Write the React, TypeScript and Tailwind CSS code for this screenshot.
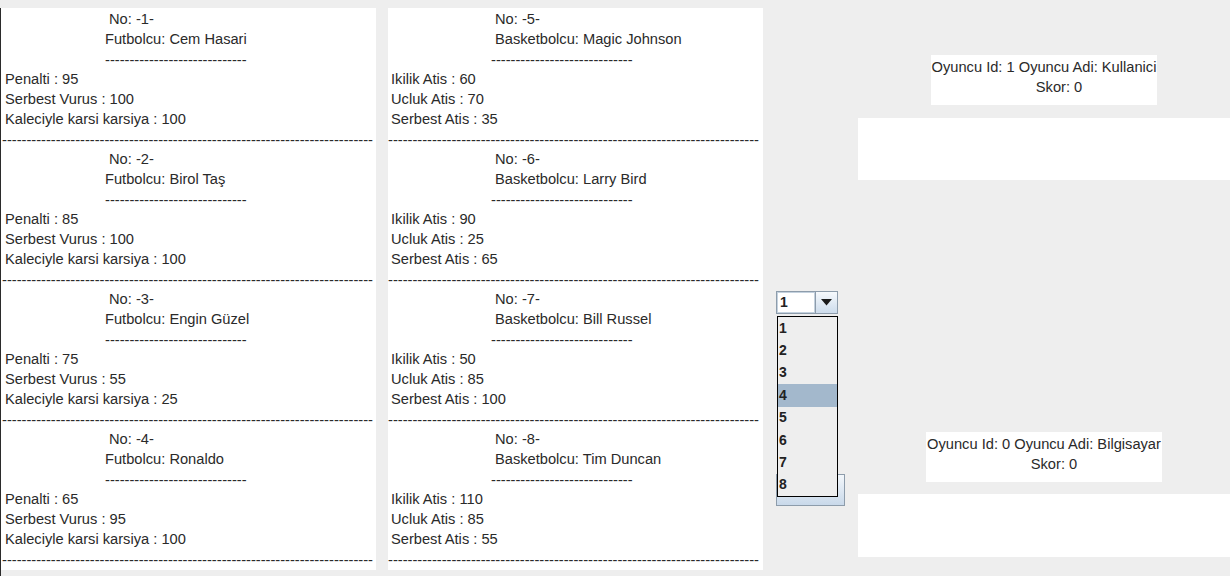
const FONT = { fontFamily: '"Liberation Sans", Arial, sans-serif' };

type Player = { no: number; kind: string; name: string; stats: [string, number][] };

const futbolcular: Player[] = [
  { no: 1, kind: "Futbolcu", name: "Cem Hasari", stats: [["Penalti", 95], ["Serbest Vurus", 100], ["Kaleciyle karsi karsiya", 100]] },
  { no: 2, kind: "Futbolcu", name: "Birol Taş", stats: [["Penalti", 85], ["Serbest Vurus", 100], ["Kaleciyle karsi karsiya", 100]] },
  { no: 3, kind: "Futbolcu", name: "Engin Güzel", stats: [["Penalti", 75], ["Serbest Vurus", 55], ["Kaleciyle karsi karsiya", 25]] },
  { no: 4, kind: "Futbolcu", name: "Ronaldo", stats: [["Penalti", 65], ["Serbest Vurus", 95], ["Kaleciyle karsi karsiya", 100]] },
];

const basketbolcular: Player[] = [
  { no: 5, kind: "Basketbolcu", name: "Magic Johnson", stats: [["Ikilik Atis", 60], ["Ucluk Atis", 70], ["Serbest Atis", 35]] },
  { no: 6, kind: "Basketbolcu", name: "Larry Bird", stats: [["Ikilik Atis", 90], ["Ucluk Atis", 25], ["Serbest Atis", 65]] },
  { no: 7, kind: "Basketbolcu", name: "Bill Russel", stats: [["Ikilik Atis", 50], ["Ucluk Atis", 85], ["Serbest Atis", 100]] },
  { no: 8, kind: "Basketbolcu", name: "Tim Duncan", stats: [["Ikilik Atis", 110], ["Ucluk Atis", 85], ["Serbest Atis", 55]] },
];

const SHORT = "-".repeat(29);
const LONG = "-".repeat(76);

function Kart({ p, basket }: { p: Player; basket?: boolean }) {
  return (
    <div className="h-[140px] overflow-hidden pt-[1px] text-[14.67px] leading-[20px] text-[#2a2a2a] whitespace-pre">
      <div className={basket ? "pl-[107px]" : "pl-[108px]"}>No: -{p.no}-</div>
      <div className={basket ? "pl-[107px]" : "pl-[104px]"}>
        {p.kind}: {p.name}
      </div>
      <div className={`relative top-[1px] ${basket ? "pl-[103px]" : "pl-[104px]"}`}>{SHORT}</div>
      {p.stats.map(([k, v]) => (
        <div key={k} className={basket ? "pl-[3px]" : "pl-[4px]"}>
          {k} : {v}
        </div>
      ))}
      <div className={`relative top-[1px] ${basket ? "pl-0" : "pl-[1px]"}`}>{LONG}</div>
    </div>
  );
}

function OyuncuEtiket({ id, ad, skorPad }: { id: number; ad: string; skorPad: string }) {
  return (
    <div className="mx-auto h-[50px] w-fit bg-white px-[1px] pt-[2px] text-center text-[14.67px] leading-[20px] whitespace-nowrap text-[#2a2a2a]">
      <div>
        Oyuncu Id: {id} Oyuncu Adi: {ad}
      </div>
      <div className={skorPad}>Skor: 0</div>
    </div>
  );
}

function Combo() {
  const items = [1, 2, 3, 4, 5, 6, 7, 8];
  return (
    <div className="relative w-[62px]">
      <div className="flex h-[23px] border border-[#8d9cab] bg-white">
        <div className="flex flex-1 items-center border border-[#c4d1de] pl-[2px] text-[14px] font-bold text-[#222]">1</div>
        <div className="flex w-[22px] items-center justify-center border-l border-[#8d9cab] bg-gradient-to-b from-[#f6f9fc] to-[#cddcec]">
          <svg width="11" height="7" viewBox="0 0 11 7">
            <path d="M0 0 L11 0 L5.5 6.5 Z" fill="#1a1a1a" />
          </svg>
        </div>
      </div>
      {/* popup list */}
      <div className="absolute left-[1px] top-[25px] z-10 w-[61px] border border-black bg-[#eeeeee]">
        {items.map((n) => (
          <div
            key={n}
            className={`flex h-[22.4px] items-center pl-[1px] text-[14px] font-bold text-[#222] ${n === 4 ? "bg-[#a3b8cc]" : ""}`}
          >
            {n}
          </div>
        ))}
      </div>
    </div>
  );
}

export default function App() {
  return (
    <div className="flex h-[576px] w-[1230px] overflow-hidden bg-[#eeeeee]" style={FONT}>
      {/* Futbolcular */}
      <div className="mt-[8px] w-[376px] border-l border-[#2b2b2b]">
        <div className="h-[562px] overflow-hidden bg-white">
          {futbolcular.map((p) => (
            <Kart key={p.no} p={p} />
          ))}
        </div>
      </div>

      {/* Basketbolcular */}
      <div className="ml-[12px] mt-[8px] h-[562px] w-[375px] overflow-hidden bg-white">
        {basketbolcular.map((p) => (
          <Kart key={p.no} p={p} basket />
        ))}
      </div>

      {/* Secim */}
      <div className="flex w-[95px] flex-col pl-[13px] pt-[291px]">
        <Combo />
        <div className="mt-[160px] h-[32px] w-[69px] border border-[#8d9cab] bg-gradient-to-b from-[#f3f7fb] to-[#c9d9ea]" />
      </div>

      {/* Skorlar */}
      <div className="flex w-[372px] flex-col">
        <div className="mt-[55px]">
          <OyuncuEtiket id={1} ad="Kullanici" skorPad="pl-[30px]" />
        </div>
        <div className="mt-[13px] h-[62px] bg-white" />
        <div className="mt-[252px]">
          <OyuncuEtiket id={0} ad="Bilgisayar" skorPad="pl-[20px]" />
        </div>
        <div className="mt-[12px] h-[63px] bg-white" />
      </div>
    </div>
  );
}
